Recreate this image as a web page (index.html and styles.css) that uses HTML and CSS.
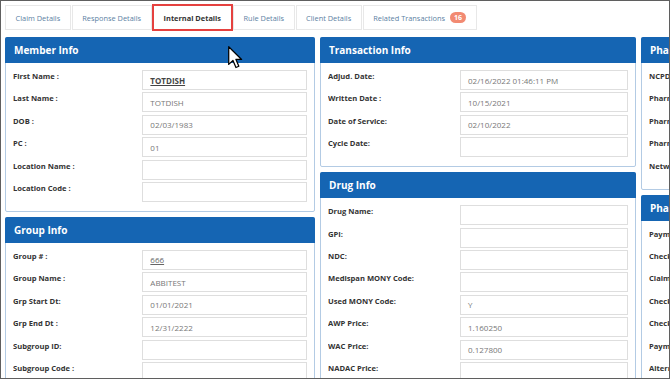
FILE: index.html
```html
<!DOCTYPE html>
<html lang="en">
<head>
    <meta charset="UTF-8">
    <title>Claim - Internal Details</title>
    <link rel="stylesheet" href="styles.css">
</head>
<body>
<div class="frame">
    <div class="tabs">
        <div class="tab">Claim Details</div>
        <div class="tab">Response Details</div>
        <div class="tab active">Internal Details</div>
        <div class="tab">Rule Details</div>
        <div class="tab">Client Details</div>
        <div class="tab">Related Transactions <span class="badge">16</span></div>
    </div>

    <div class="columns">
        <div class="column">
            <div class="panel">
                <div class="panel-head">Member Info</div>
                <div class="panel-body">
                    <div class="row"><label>First Name :</label><div class="field"><a class="link strong">TOTDISH</a></div></div>
                    <div class="row"><label>Last Name :</label><div class="field">TOTDISH</div></div>
                    <div class="row"><label>DOB :</label><div class="field">02/03/1983</div></div>
                    <div class="row"><label>PC :</label><div class="field">01</div></div>
                    <div class="row"><label>Location Name :</label><div class="field"></div></div>
                    <div class="row"><label>Location Code :</label><div class="field"></div></div>
                </div>
            </div>
            <div class="panel">
                <div class="panel-head">Group Info</div>
                <div class="panel-body">
                    <div class="row"><label>Group # :</label><div class="field"><a class="link">666</a></div></div>
                    <div class="row"><label>Group Name :</label><div class="field">ABBITEST</div></div>
                    <div class="row"><label>Grp Start Dt:</label><div class="field">01/01/2021</div></div>
                    <div class="row"><label>Grp End Dt :</label><div class="field">12/31/2222</div></div>
                    <div class="row"><label>Subgroup ID:</label><div class="field"></div></div>
                    <div class="row"><label>Subgroup Code :</label><div class="field"></div></div>
                </div>
            </div>
        </div>

        <div class="column">
            <div class="panel">
                <div class="panel-head">Transaction Info</div>
                <div class="panel-body">
                    <div class="row"><label>Adjud. Date:</label><div class="field">02/16/2022 01:46:11 PM</div></div>
                    <div class="row"><label>Written Date :</label><div class="field">10/15/2021</div></div>
                    <div class="row"><label>Date of Service:</label><div class="field">02/10/2022</div></div>
                    <div class="row"><label>Cycle Date:</label><div class="field"></div></div>
                </div>
            </div>
            <div class="panel">
                <div class="panel-head">Drug Info</div>
                <div class="panel-body">
                    <div class="row"><label>Drug Name:</label><div class="field"></div></div>
                    <div class="row"><label>GPI:</label><div class="field"></div></div>
                    <div class="row"><label>NDC:</label><div class="field"></div></div>
                    <div class="row"><label>Medispan MONY Code:</label><div class="field"></div></div>
                    <div class="row"><label>Used MONY Code:</label><div class="field">Y</div></div>
                    <div class="row"><label>AWP Price:</label><div class="field">1.160250</div></div>
                    <div class="row"><label>WAC Price:</label><div class="field">0.127800</div></div>
                    <div class="row"><label>NADAC Price:</label><div class="field"></div></div>
                </div>
            </div>
        </div>

        <div class="column">
            <div class="panel">
                <div class="panel-head">Pharmacy Info</div>
                <div class="panel-body">
                    <div class="row"><label>NCPDP ID:</label><div class="field"></div></div>
                    <div class="row"><label>Pharmacy Name:</label><div class="field"></div></div>
                    <div class="row"><label>Pharmacy NPI:</label><div class="field"></div></div>
                    <div class="row"><label>Pharmacy Phone:</label><div class="field"></div></div>
                    <div class="row"><label>Network:</label><div class="field"></div></div>
                </div>
            </div>
            <div class="panel">
                <div class="panel-head">Pharmacy Payment</div>
                <div class="panel-body">
                    <div class="row"><label>Payment Type:</label><div class="field"></div></div>
                    <div class="row"><label>Check Number:</label><div class="field"></div></div>
                    <div class="row"><label>Claim Paid Date:</label><div class="field"></div></div>
                    <div class="row"><label>Check Date:</label><div class="field"></div></div>
                    <div class="row"><label>Check Amount:</label><div class="field"></div></div>
                    <div class="row"><label>Payment Status:</label><div class="field"></div></div>
                    <div class="row"><label>Alternate Payee:</label><div class="field"></div></div>
                </div>
            </div>
        </div>
    </div>

    <!-- mouse pointer over the Member Info header -->
    <svg class="cursor" width="15" height="23" viewBox="0 0 13 20">
        <path d="M0.6 0.6 L0.6 16 L4.3 12.6 L6.9 18.7 L9.4 17.6 L6.9 11.7 L11.8 11.7 Z" fill="#fff" stroke="#000" stroke-width="1.1" stroke-linejoin="round"/>
    </svg>
</div>
</body>
</html>
```

FILE: styles.css
```css
body {
    margin: 0;
    background-color: #fff;
    font-family: 'Open Sans', 'Liberation Sans', sans-serif;
}
.frame {
    position: relative;
    width: 670px;
    height: 379px;
    box-sizing: border-box;
    border: 1px solid #5f5f5f;
    padding: 4px 0 0 4px;
    overflow: hidden;
}
.tabs {
    display: flex;
    gap: 1px;
    margin-bottom: 7px;
}
.tab {
    display: flex;
    align-items: center;
    height: 25px;
    box-sizing: border-box;
    padding: 0 9.5px;
    border: 1px solid #e8e8e8;
    font-size: 7.4px;
    color: #5d7fa3;
    white-space: nowrap;
}
.tab.active {
    border-color: #e5413f;
    box-shadow: 0 0 0 1px #e5413f;
    color: #333;
    font-weight: bold;
    padding: 0 10px;
}
.badge {
    display: inline-block;
    margin-left: 5px;
    padding: 0 4px;
    height: 11px;
    line-height: 11px;
    border-radius: 6px;
    background-color: #f28a72;
    color: #fff;
    font-size: 7px;
    font-weight: bold;
}
.columns {
    display: grid;
    grid-template-columns: 310px 316px 316px;
    column-gap: 5px;
    align-items: start;
}
.column {
    display: flex;
    flex-direction: column;
    gap: 5px;
}
.panel {
    border: 1px solid #b3cbe4;
    border-radius: 2px;
    background-color: #fff;
}
.panel-head {
    height: 26px;
    margin: -1px -1px 0;
    padding-left: 9px;
    display: flex;
    align-items: center;
    background-color: #1565b3;
    color: #fff;
    font-size: 10px;
    font-weight: bold;
    border-radius: 2px 2px 0 0;
}
.panel-body {
    padding: 7px 7px 9px 7px;
    display: flex;
    flex-direction: column;
    gap: 2.4px;
}
.row {
    display: grid;
    grid-template-columns: 44% 1fr;
    align-items: start;
}
.row label {
    font-size: 7.6px;
    line-height: 12px;
    font-weight: bold;
    color: #333;
    white-space: nowrap;
    overflow: hidden;
}
.field {
    height: 20px;
    box-sizing: border-box;
    border: 1px solid #dedede;
    padding-left: 7px;
    display: flex;
    align-items: center;
    font-size: 8px;
    color: #777;
    white-space: nowrap;
}
.link {
    color: #666;
    text-decoration: underline;
}
.link.strong {
    color: #444;
    font-weight: bold;
}
.cursor {
    position: absolute;
    left: 227px;
    top: 45px;
}
```
